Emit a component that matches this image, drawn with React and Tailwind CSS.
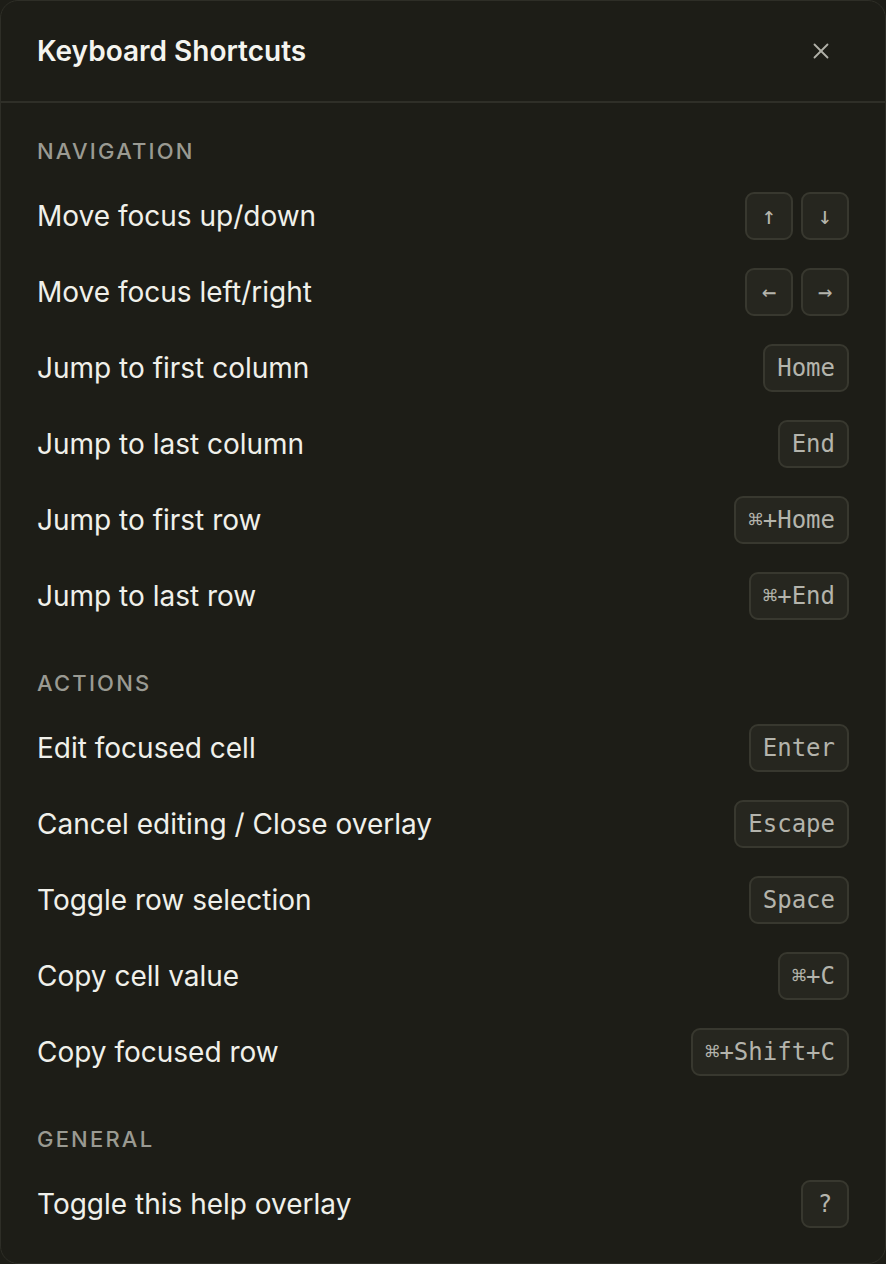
import React from 'react';
import { X } from 'lucide-react';

const sections = [
  {
    title: 'Navigation',
    items: [
      { label: 'Move focus up/down', keys: ['↑', '↓'] },
      { label: 'Move focus left/right', keys: ['←', '→'] },
      { label: 'Jump to first column', keys: ['Home'] },
      { label: 'Jump to last column', keys: ['End'] },
      { label: 'Jump to first row', keys: ['⌘+Home'] },
      { label: 'Jump to last row', keys: ['⌘+End'] },
    ],
  },
  {
    title: 'Actions',
    items: [
      { label: 'Edit focused cell', keys: ['Enter'] },
      { label: 'Cancel editing / Close overlay', keys: ['Escape'] },
      { label: 'Toggle row selection', keys: ['Space'] },
      { label: 'Copy cell value', keys: ['⌘+C'] },
      { label: 'Copy focused row', keys: ['⌘+Shift+C'] },
    ],
  },
  {
    title: 'General',
    items: [{ label: 'Toggle this help overlay', keys: ['?'] }],
  },
];

const Kbd = ({ children }) => (
  <kbd className="flex h-[48px] min-w-[48px] items-center justify-center rounded-[9px] border-2 border-[#38382f] bg-[#26261f] px-[12px] text-[24px] text-[#b4b4ac] [font-family:'DejaVu_Sans_Mono',monospace]">
    {children}
  </kbd>
);

const App = () => {
  return (
    <div className="min-h-screen bg-[#1d1d17] [font-family:Inter,'Noto_Sans',sans-serif]">
      <div className="flex h-[1264px] flex-col rounded-[18px] border border-[#2e2e27] bg-[#1d1d17]">
        {/* Header */}
        <div className="flex h-[102px] shrink-0 items-center justify-between border-b-2 border-[#2f2f28] pl-[36px] pr-[51px]">
          <h2 className="text-[28px] font-semibold text-[#f4f4ef]">Keyboard Shortcuts</h2>
          <X className="h-[26px] w-[26px] text-[#b0b0a8]" strokeWidth={1.7} />
        </div>

        {/* Body */}
        <div className="flex flex-col gap-[35px] pl-[36px] pr-[36px] pt-[34px]">
          {sections.map((section) => (
            <div key={section.title}>
              <div className="mb-[13px] h-[28px] text-[22px] font-medium uppercase leading-[28px] tracking-[0.1em] text-[#9a9a92]">
                {section.title}
              </div>
              {section.items.map((item) => (
                <div key={item.label} className="flex h-[76px] items-center justify-between">
                  <span className="text-[28px] text-[#f0f0ea]">{item.label}</span>
                  <div className="flex gap-[8px]">
                    {item.keys.map((k) => (
                      <Kbd key={k}>{k}</Kbd>
                    ))}
                  </div>
                </div>
              ))}
            </div>
          ))}
        </div>
      </div>
    </div>
  );
};

export default App;
